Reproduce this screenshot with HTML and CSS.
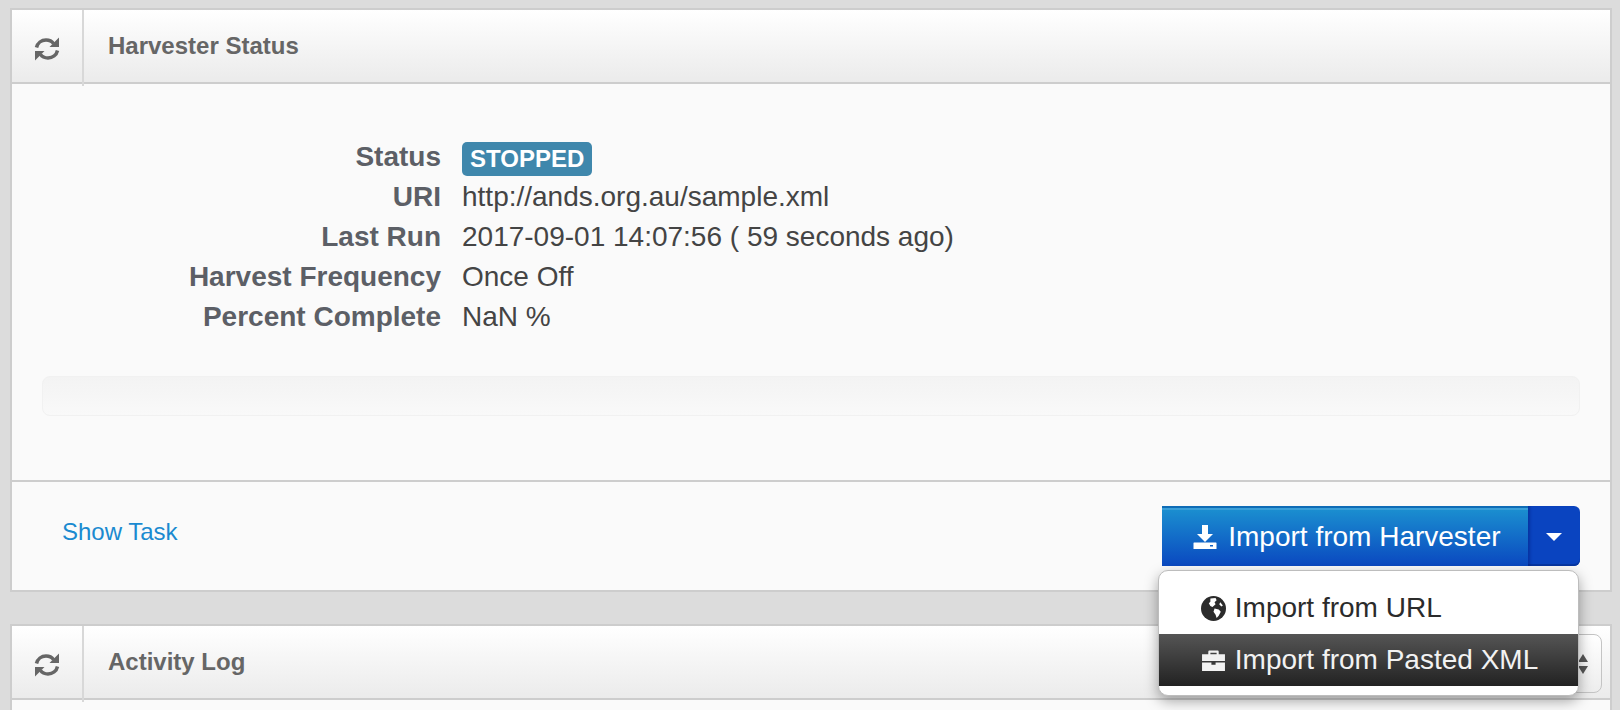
FILE: index.html
```html
<!DOCTYPE html>
<html lang="en">
<head>
    <meta charset="UTF-8">
    <title>Harvester Status</title>
    <link rel="stylesheet" href="styles.css">
</head>
<body>
    <section class="box">
        <header class="box-header">
            <div class="box-icon">
                <svg class="refresh" viewBox="0 0 26 26"><path class="arc" d="M2.500 11.500C3.500 7 7.500 4 12 4c3.200 0 6 1.300 7.500 3.600"/><path d="M25 1.500v9.500h-9.500z"/><path class="arc" d="M23.500 14.500C22.500 19 18.500 22 14 22c-3.200 0-6-1.300-7.500-3.600"/><path d="M1 24.500v-9.500h9.500z"/></svg>
            </div>
            <h3 class="box-title">Harvester Status</h3>
        </header>
        <div class="box-content">
            <dl class="details">
                <dt>Status</dt>
                <dd><span class="badge">STOPPED</span></dd>
                <dt>URI</dt>
                <dd>http://ands.org.au/sample.xml</dd>
                <dt>Last Run</dt>
                <dd>2017-09-01 14:07:56 ( 59 seconds ago)</dd>
                <dt>Harvest Frequency</dt>
                <dd>Once Off</dd>
                <dt>Percent Complete</dt>
                <dd>NaN %</dd>
            </dl>
            <div class="progress"></div>
        </div>
        <footer class="box-footer">
            <a class="task-link" href="#">Show Task</a>
            <div class="btn-group">
                <button class="btn btn-main">
                    <svg class="icon" viewBox="0 0 24 24"><path d="M9 0h6v9h5l-8 8-8-8h5z"/><path fill-rule="evenodd" d="M1 17.500h22a1 1 0 0 1 .5.500v6H.5v-6a1 1 0 0 1 .5-.5zM17 20v1.500h3V20z"/></svg>
                    Import from Harvester
                </button>
                <button class="btn btn-caret"><span class="caret"></span></button>
                <ul class="menu">
                    <li class="menu-item">
                        <svg class="icon" viewBox="0 0 24 24"><circle cx="12" cy="12" r="12" fill="#2b2b2b"/><path fill="#fff" d="M9 2.500l5-.5 1 2-2 2 1 2-3 2.500-2-1-1.500-2.500 1.500-1.500zM13 12l4 1 2 2-2 4-2 2-1-3-2-3zM18.500 6l2.500 3-1.500 1-2-2z"/></svg>
                        Import from URL
                    </li>
                    <li class="menu-item active">
                        <svg class="icon" viewBox="0 0 24 24"><path fill-rule="evenodd" d="M8 2.500h8a1 1 0 0 1 1 1V6h6v6.500H1V6h6V3.500a1 1 0 0 1 1-1zM9 4.500V6h6V4.500z"/><path d="M1 14h9v2h4v-2h9v8H1z"/></svg>
                        Import from Pasted XML
                    </li>
                </ul>
            </div>
        </footer>
    </section>

    <section class="box">
        <header class="box-header">
            <div class="box-icon">
                <svg class="refresh" viewBox="0 0 26 26"><path class="arc" d="M2.500 11.500C3.500 7 7.500 4 12 4c3.200 0 6 1.300 7.500 3.600"/><path d="M25 1.500v9.500h-9.500z"/><path class="arc" d="M23.500 14.500C22.500 19 18.500 22 14 22c-3.200 0-6-1.300-7.500-3.600"/><path d="M1 24.500v-9.500h9.500z"/></svg>
            </div>
            <h3 class="box-title">Activity Log</h3>
            <div class="select-stub">
                <svg class="select-arrows" viewBox="0 0 10 24"><path d="M5 2l5 8H0zM0 14h10l-5 8z"/></svg>
            </div>
        </header>
        <div class="box-blank"></div>
    </section>
</body>
</html>
```

FILE: styles.css
```css
html, body {
    height: 710px;
    overflow: hidden;
}
body {
    margin: 0;
    padding: 8px 8px 0 10px;
    box-sizing: border-box;
    background-color: #dcdcdc;
    font-family: "Liberation Sans", Arial, sans-serif;
    color: #444;
}
.box {
    border: 2px solid #cdcdcd;
    background-color: #fafafa;
    margin-bottom: 32px;
}
.box:last-child {
    border-bottom: none;
    margin-bottom: 0;
}
.box-header {
    display: flex;
    align-items: stretch;
    height: 72px;
    border-bottom: 2px solid #cdcdcd;
    background: linear-gradient(to bottom, #ffffff, #ebebeb);
}
.box-icon {
    position: relative;
    width: 70px;
    border-right: 2px solid #d8d8d8;
    display: flex;
    align-items: center;
    justify-content: center;
    padding-top: 6px;
    box-sizing: content-box;
}
.box-icon::after {
    content: "";
    position: absolute;
    right: -2px;
    bottom: -4px;
    width: 2px;
    height: 4px;
    background-color: #d8d8d8;
}
.refresh {
    width: 26px;
    height: 26px;
    fill: #666;
}
.refresh .arc {
    fill: none;
    stroke: #666;
    stroke-width: 3.500;
}
.box-title {
    margin: 0 0 0 24px;
    font-size: 24px;
    font-weight: bold;
    line-height: 72px;
    color: #666;
}
.box-content {
    padding: 53px 30px 64px 30px;
    border-bottom: 2px solid #cdcdcd;
}
.details {
    display: grid;
    grid-template-columns: 399px 1fr;
    column-gap: 21px;
    margin: 0;
    font-size: 28px;
    line-height: 40px;
}
.details dt {
    text-align: right;
    font-weight: bold;
    color: #5c5f66;
}
.details dd {
    margin: 0;
}
.badge {
    display: inline-block;
    padding: 0 8px;
    height: 34px;
    line-height: 34px;
    border-radius: 5px;
    background-color: #3f87ac;
    color: #fff;
    font-weight: bold;
    font-size: 24px;
    vertical-align: -1px;
}
.progress {
    height: 38px;
    margin-top: 39px;
    border: 1px solid #f1f1f1;
    border-radius: 8px;
    background: linear-gradient(to bottom, #f3f3f3, #f9f9f9);
}
.box-footer {
    display: flex;
    justify-content: space-between;
    align-items: flex-start;
    height: 108px;
    padding: 24px 30px 0 50px;
    box-sizing: border-box;
}
.task-link {
    color: #1a8ad0;
    font-size: 24px;
    line-height: 52px;
    text-decoration: none;
}
.btn-group {
    position: relative;
    display: flex;
    height: 60px;
}
.btn {
    border: none;
    margin: 0;
    color: #fff;
    font-family: inherit;
    cursor: pointer;
}
.btn-main {
    width: 366px;
    padding-left: 10px;
    font-size: 28px;
    border-top: 2px solid #0e6cb6;
    box-shadow: inset 0 2px 0 #3a9fd8;
    background: linear-gradient(to bottom, #1b90d0, #0a48c0);
    white-space: nowrap;
}
.btn-caret {
    width: 52px;
    border-radius: 0 6px 6px 0;
    background: #0a44c0;
    box-shadow: inset 3px 0 3px -1px rgba(0, 20, 100, 0.35), inset 0 -2px 0 #0838a4;
}
.caret {
    display: inline-block;
    border-left: 8px solid transparent;
    border-right: 8px solid transparent;
    border-top: 8px solid #fff;
}
.icon {
    width: 24px;
    height: 24px;
    fill: currentColor;
    vertical-align: -3px;
    margin-right: 3px;
}
.menu-item .icon {
    width: 25px;
    height: 25px;
    vertical-align: -4px;
    margin-right: 1px;
}
.menu {
    position: absolute;
    top: 64px;
    left: -4px;
    width: 421px;
    height: 126px;
    box-sizing: border-box;
    margin: 0;
    padding: 11px 0;
    list-style: none;
    background-color: #fff;
    border: 1px solid #bdbdbd;
    border-radius: 10px;
    box-shadow: 0 5px 14px rgba(0, 0, 0, 0.35);
}
.menu-item {
    height: 52px;
    line-height: 52px;
    padding-left: 42px;
    font-size: 28px;
    color: #2b2b2b;
    white-space: nowrap;
}
.menu-item.active {
    color: #f2f2f2;
    background: linear-gradient(to bottom, #555, #222);
}
.select-stub {
    margin: 8px 8px 0 auto;
    width: 100px;
    height: 59px;
    box-sizing: border-box;
    border: 1px solid #c4c4c4;
    border-radius: 8px;
    background: linear-gradient(to bottom, #fff, #ededed);
    display: flex;
    align-items: center;
    justify-content: flex-end;
    padding-right: 13px;
}
.select-arrows {
    width: 10px;
    height: 24px;
    fill: #555;
}
.box-blank {
    height: 10px;
}
```
